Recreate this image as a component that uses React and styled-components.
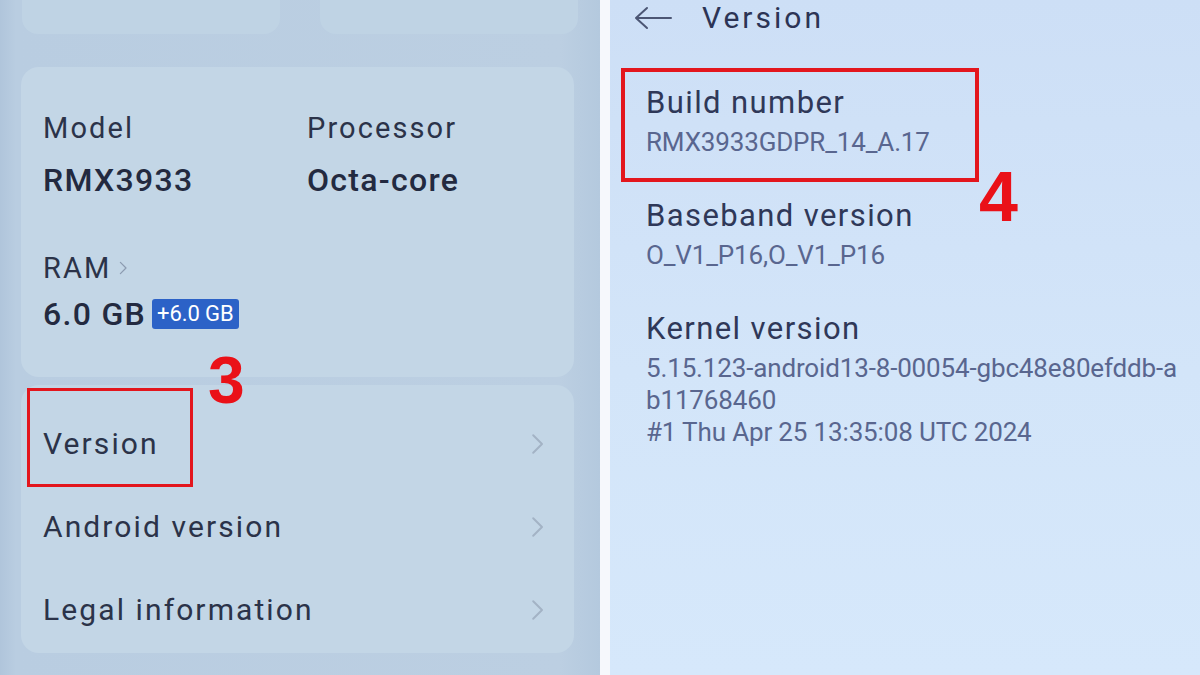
import React from "react";
import styled, { createGlobalStyle } from "styled-components";

const Global = createGlobalStyle`
	html, body {
		margin: 0;
		padding: 0;
		width: 1200px;
		height: 675px;
		overflow: hidden;
		font-family: Roboto, "Liberation Sans", sans-serif;
	}
`;

const Screen = styled.div`
	display: flex;
	width: 1200px;
	height: 675px;
	background: #f4f7fb;
`;

const LeftPanel = styled.div`
	position: relative;
	width: 600px;
	height: 675px;
	display: flex;
	flex-direction: column;
	background: linear-gradient(90deg, #b0c5db 0px, #b9cde1 16px, #bccfe2 560px, #b4c9de 600px);
	color: #283048;
	overflow: hidden;
`;

const Divider = styled.div`
	width: 10px;
	background: #f6f8fc;
`;

const RightPanel = styled.div`
	position: relative;
	flex: 1;
	height: 675px;
	background: linear-gradient(180deg, #cddff6 0%, #d3e5f9 55%, #d6e8fb 100%);
	color: #2c3455;
	overflow: hidden;
`;

const TopTiles = styled.div`
	display: flex;
	gap: 40px;
	height: 34px;
	padding: 0 22px;
`;

const Tile = styled.div`
	flex: 1;
	background: #bfd3e4;
	border-radius: 0 0 16px 16px;
`;

const Card = styled.div`
	margin: ${(p) => p.$mt}px 26px 0 21px;
	background: #c3d6e6;
	border-radius: 18px;
	padding: ${(p) => p.$pad};
	height: ${(p) => p.$h}px;
	box-sizing: border-box;
`;

const SpecGrid = styled.div`
	display: grid;
	grid-template-columns: 264px 1fr;
`;

const Spec = styled.div`
	display: flex;
	flex-direction: column;
	margin-top: ${(p) => p.$mt || 0}px;
`;

const SpecLabel = styled.div`
	display: flex;
	align-items: center;
	gap: 8px;
	font-size: 29px;
	line-height: 34px;
	letter-spacing: 2.1px;
	color: #2b3349;
`;

const SpecValue = styled.div`
	display: flex;
	align-items: center;
	margin-top: ${(p) => p.$mt ?? 15}px;
	font-size: 32px;
	line-height: 40px;
	font-weight: 500;
	letter-spacing: 1.3px;
	color: #232a40;
`;

const Badge = styled.span`
	display: inline-flex;
	align-items: center;
	height: 30px;
	margin-left: 6px;
	padding: 0 5px;
	background: #2c62c7;
	border-radius: 3px;
	color: #ffffff;
	font-size: 22px;
	font-weight: 400;
	letter-spacing: -0.1px;
`;

const Row = styled.div`
	display: flex;
	align-items: center;
	justify-content: space-between;
	height: 83px;
	font-size: 30px;
	letter-spacing: 2.1px;
	color: #2b3349;
`;

const Chevron = ({ size = 22, color = "#a3b3c5" }) => (
	<svg width={size * 0.6} height={size} viewBox="0 0 12 20" fill="none">
		<path d="M2 2 L10 10 L2 18" stroke={color} strokeWidth="1.8" strokeLinecap="round" strokeLinejoin="round" />
	</svg>
);

const Header = styled.div`
	display: flex;
	align-items: center;
	gap: 30px;
	height: 36px;
	padding: 0 0 0 24px;
`;

const HeaderTitle = styled.div`
	font-size: 30px;
	line-height: 36px;
	letter-spacing: 3px;
	color: #2c3455;
`;

const ItemList = styled.div`
	display: flex;
	flex-direction: column;
	gap: 39px;
	padding: 48px 0 0 36px;
`;

const Item = styled.div`
	display: flex;
	flex-direction: column;
`;

const ItemTitle = styled.div`
	font-size: 31px;
	line-height: 38px;
	letter-spacing: 1.4px;
	margin-bottom: 4px;
	color: #2f3858;
`;

const ItemValue = styled.div`
	font-size: 26px;
	line-height: 32px;
	letter-spacing: -0.15px;
	color: #59668f;
`;

const Marker = styled.div`
	position: absolute;
	left: ${(p) => p.$x}px;
	top: ${(p) => p.$y}px;
	width: ${(p) => p.$w}px;
	height: ${(p) => p.$h}px;
	border: ${(p) => p.$b}px solid #e3161d;
	box-sizing: border-box;
`;

const StepNumber = styled.div`
	position: absolute;
	left: ${(p) => p.$x}px;
	top: ${(p) => p.$y}px;
	font-family: "Liberation Sans", Arial, sans-serif;
	font-weight: 700;
	font-size: ${(p) => p.$size}px;
	line-height: ${(p) => p.$size}px;
	color: #ea1118;
`;

const BackArrow = () => (
	<svg width="38" height="24" viewBox="0 0 38 24" fill="none">
		<path d="M37 12 H2 M13 2 L2 12 L13 22" stroke="#4c5674" strokeWidth="2" strokeLinecap="round" strokeLinejoin="round" />
	</svg>
);

const listRows = ["Version", "Android version", "Legal information"];

const versionItems = [
	{ title: "Build number", value: ["RMX3933GDPR_14_A.17"] },
	{ title: "Baseband version", value: ["O_V1_P16,O_V1_P16"] },
	{
		title: "Kernel version",
		value: [
			"5.15.123-android13-8-00054-gbc48e80efddb-a",
			"b11768460",
			"#1 Thu Apr 25 13:35:08 UTC 2024",
		],
	},
];

export default function App() {
	return (
		<>
			<Global />
			<Screen>
				<LeftPanel>
					<TopTiles>
						<Tile />
						<Tile />
					</TopTiles>
					<Card $mt={33} $pad="44px 0 0 22px" $h={310}>
						<SpecGrid>
							<Spec>
								<SpecLabel>Model</SpecLabel>
								<SpecValue>RMX3933</SpecValue>
							</Spec>
							<Spec>
								<SpecLabel>Processor</SpecLabel>
								<SpecValue>Octa-core</SpecValue>
							</Spec>
							<Spec $mt={51}>
								<SpecLabel>
									RAM <Chevron size={14} color="#8c9bb0" />
								</SpecLabel>
								<SpecValue $mt={9}>
									6.0 GB<Badge>+6.0 GB</Badge>
								</SpecValue>
							</Spec>
						</SpecGrid>
					</Card>
					<Card $mt={8} $pad="17px 30px 0 22px" $h={268}>
						{listRows.map((r) => (
							<Row key={r}>
								{r}
								<Chevron />
							</Row>
						))}
					</Card>
					<Marker $x={27} $y={388} $w={166} $h={99} $b={3} />
					<StepNumber $x={208} $y={347} $size={66}>
						3
					</StepNumber>
				</LeftPanel>
				<Divider />
				<RightPanel>
					<Header>
						<BackArrow />
						<HeaderTitle>Version</HeaderTitle>
					</Header>
					<ItemList>
						{versionItems.map((it) => (
							<Item key={it.title}>
								<ItemTitle>{it.title}</ItemTitle>
								{it.value.map((v) => (
									<ItemValue key={v}>{v}</ItemValue>
								))}
							</Item>
						))}
					</ItemList>
					<Marker $x={11} $y={68} $w={358} $h={114} $b={4} />
					<StepNumber $x={369} $y={162} $size={70}>
						4
					</StepNumber>
				</RightPanel>
			</Screen>
		</>
	);
}
